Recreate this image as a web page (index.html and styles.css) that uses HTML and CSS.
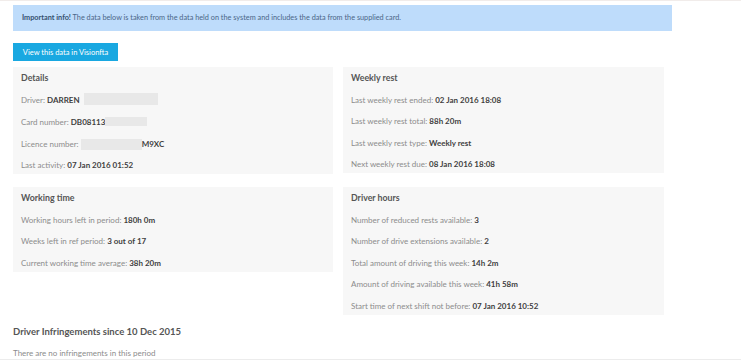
FILE: index.html
```html
<!DOCTYPE html>
<html lang="en">
<head>
    <meta charset="UTF-8">
    <meta name="viewport" content="width=device-width, initial-scale=1.0">
    <title>Driver summary</title>
    <link rel="stylesheet" href="styles.css">
</head>
<body>
    <div class="wrapper">
        <div class="info-box">
            <b>Important info!</b> The data below is taken from the data held on the system and includes the data from the supplied card.
        </div>

        <input type="button" class="btn" value="View this data in Visionfta">

        <div class="panels">
            <section class="panel">
                <h4>Details</h4>
                <p>Driver: <b>DARREN</b> <span class="redact r-driver"></span></p>
                <p>Card number: <b>DB08113</b><span class="redact r-card"></span></p>
                <p>Licence number: <span class="redact r-licence"></span><b>M9XC</b></p>
                <p>Last activity: <b>07 Jan 2016 01:52</b></p>
            </section>
            <section class="panel">
                <h4>Weekly rest</h4>
                <p>Last weekly rest ended: <b>02 Jan 2016 18:08</b></p>
                <p>Last weekly rest total: <b>88h 20m</b></p>
                <p>Last weekly rest type: <b>Weekly rest</b></p>
                <p>Next weekly rest due: <b>08 Jan 2016 18:08</b></p>
            </section>
            <section class="panel">
                <h4>Working time</h4>
                <p>Working hours left in period: <b>180h 0m</b></p>
                <p>Weeks left in ref period: <b>3 out of 17</b></p>
                <p>Current working time average: <b>38h 20m</b></p>
            </section>
            <section class="panel">
                <h4>Driver hours</h4>
                <p>Number of reduced rests available: <b>3</b></p>
                <p>Number of drive extensions available: <b>2</b></p>
                <p>Total amount of driving this week: <b>14h 2m</b></p>
                <p>Amount of driving available this week: <b>41h 58m</b></p>
                <p>Start time of next shift not before: <b>07 Jan 2016 10:52</b></p>
            </section>
        </div>

        <h4 class="infringe-title">Driver Infringements since 10 Dec 2015</h4>
        <p class="infringe-text">There are no infringements in this period</p>
    </div>
    <div class="footer-line"></div>
</body>
</html>
```

FILE: styles.css
```css
:root{
    --info-bg : #bedcfb;
    --btn-color : #19a8e1;
    --panel-bg : #f7f7f7;
    --label-color : #8c8c8c;
    --value-color : #3f3f3f;
}

* {
    box-sizing : border-box;
}

body {
    margin : 0;
    border-top : 1px solid #f1ecea;
    background-color : white;
    font-family : Lato, "Open Sans", sans-serif;
    color : var(--label-color);
    height : 360px;
    overflow : hidden;
}

.wrapper {
    padding : 4px 13px 0;
}

.info-box {
    width : 659px;
    height : 26px;
    line-height : 26px;
    padding : 0 9px;
    background-color : var(--info-bg);
    color : #4b6687;
    font-size : 7.3px;
}

.info-box b {
    color : #34506f;
}

.btn {
    display : block;
    margin-top : 12px;
    width : 105px;
    height : 18px;
    border : none;
    padding : 0;
    background-color : var(--btn-color);
    color : white;
    font-family : inherit;
    font-size : 7.5px;
    text-align : center;
}

.panels {
    display : grid;
    grid-template-columns : 320px 321px;
    column-gap : 10px;
    row-gap : 13px;
    align-items : start;
    margin-top : 6px;
}

.panel {
    background-color : var(--panel-bg);
    padding : 5px 8px 3px;
}

h4 {
    margin : 0;
    font-size : 8.8px;
    line-height : 12px;
    color : #555;
}

.panel p {
    margin : 10.5px 0 0;
    font-size : 8px;
    line-height : 11px;
    white-space : nowrap;
}

p b {
    color : var(--value-color);
}

.redact {
    display : inline-block;
    vertical-align : middle;
    background-color : #e8e8e8;
}

.r-driver {
    width : 74px;
    height : 12px;
    margin-left : 2px;
    position : relative;
    top : -2px;
}

.r-card {
    width : 42px;
    height : 9px;
    position : relative;
    top : -1px;
}

.r-licence {
    width : 61px;
    height : 11px;
}

.infringe-title {
    margin-top : 11px;
    font-size : 9.5px;
}

.infringe-text {
    margin : 10.5px 0 0;
    font-size : 8px;
    line-height : 11px;
}

.footer-line {
    height : 2px;
    background-color : #ececec;
}
```
